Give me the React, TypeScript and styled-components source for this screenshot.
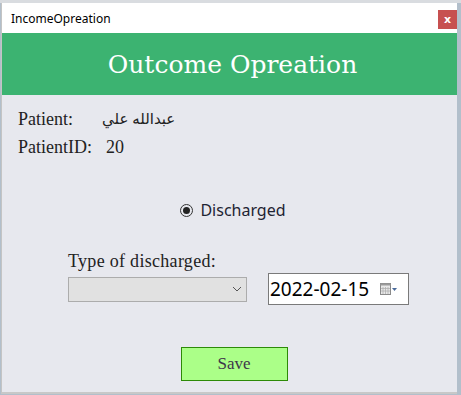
import * as React from 'react';
import styled, { createGlobalStyle } from 'styled-components';

const GlobalStyle = createGlobalStyle`
  html, body {
    margin: 0;
    padding: 0;
    background: #b9c3cc;
  }
  body {
    width: 461px;
    height: 395px;
    overflow: hidden;
  }
`;

const Desktop = styled.div`
  width: 461px;
  height: 395px;
  box-sizing: border-box;
  padding: 3px 4px 1px 1px;
  background: linear-gradient(to bottom, #d9dce0 0, #d9dce0 3px, #b2bfcb 3px);
`;

const Window = styled.div`
  height: 100%;
  box-sizing: border-box;
  border-left: 1px solid #c4c4c4;
  border-bottom: 2px solid #c8c8c8;
  display: flex;
  flex-direction: column;
  background: #e7e8ee;
`;

const TitleBar = styled.div`
  height: 30px;
  background: #ffffff;
  display: flex;
  align-items: center;
  justify-content: space-between;
  padding: 0 0 0 9px;
  font-family: "Noto Sans", "Open Sans", sans-serif;
  font-size: 12px;
  color: #000;
`;

const CloseButton = styled.div`
  width: 19px;
  height: 19px;
  margin-top: 3px;
  background: #c75050;
  color: #fff;
  font-family: "DejaVu Sans", sans-serif;
  font-weight: bold;
  font-size: 11px;
  display: flex;
  align-items: center;
  justify-content: center;
  line-height: 1;
`;

const Banner = styled.div`
  height: 62px;
  background: #3cb371;
  color: #ffffff;
  display: flex;
  align-items: center;
  justify-content: center;
  padding-left: 6px;
  font-family: "DejaVu Serif", serif;
  font-size: 25px;
`;

const Body = styled.div`
  flex: 1;
  display: flex;
  flex-direction: column;
  padding: 10px 0 0 16px;
  font-family: "Liberation Serif", "DejaVu Sans", serif;
  font-size: 18px;
  color: #222;
`;

const InfoRow = styled.div`
  display: flex;
  align-items: center;
  height: 28px;
`;

const InfoLabel = styled.span<{ $w: number }>`
  width: ${(p) => p.$w}px;
`;

const ArabicValue = styled.span`
  font-family: "Liberation Serif", "DejaVu Sans", serif;
  font-size: 15px;
  direction: rtl;
`;

const RadioRow = styled.div`
  display: flex;
  align-items: center;
  justify-content: center;
  gap: 7px;
  margin-top: 37px;
  padding-right: 9px;
  height: 24px;
  font-family: "Noto Sans", "Open Sans", sans-serif;
  font-size: 16px;
  color: #1e2433;
`;

const RadioCircle = styled.span`
  width: 11px;
  height: 11px;
  border: 1px solid #333;
  border-radius: 50%;
  display: flex;
  align-items: center;
  justify-content: center;
  &::after {
    content: "";
    width: 7px;
    height: 7px;
    border-radius: 50%;
    background: #222;
  }
`;

const TypeSection = styled.div`
  display: flex;
  flex-direction: column;
  margin-top: 28px;
  padding-left: 50px;
`;

const TypeLabel = styled.div`
  height: 22px;
  line-height: 22px;
  margin-bottom: 1px;
  letter-spacing: 0.3px;
`;

const Controls = styled.div`
  display: flex;
  align-items: center;
  gap: 21px;
  height: 32px;
`;

const SelectBox = styled.div`
  width: 179px;
  height: 25px;
  box-sizing: border-box;
  border: 1px solid #acacac;
  background: #e1e1e1;
  display: flex;
  align-items: center;
  justify-content: flex-end;
  padding-right: 4px;
`;

const DateBox = styled.div`
  width: 141px;
  height: 32px;
  box-sizing: border-box;
  border: 1px solid #7a7a7a;
  background: #ffffff;
  display: flex;
  align-items: center;
  justify-content: space-between;
  padding: 0 10px 0 1px;
  font-family: "Noto Sans", "Open Sans", sans-serif;
  font-size: 19px;
  color: #000;
`;

const SaveRow = styled.div`
  display: flex;
  justify-content: center;
  margin-top: 42px;
  padding-right: 7px;
`;

const SaveButton = styled.button`
  width: 107px;
  height: 34px;
  box-sizing: border-box;
  border: 1px solid #2d8a07;
  background: #abff88;
  font-family: "Liberation Serif", serif;
  font-size: 17px;
  color: #3e364a;
  padding: 0;
`;

function Chevron() {
  return (
    <svg width="10" height="6" viewBox="0 0 10 6">
      <path d="M1 1 L5 5 L9 1" fill="none" stroke="#555" strokeWidth="1" />
    </svg>
  );
}

function CalendarIcon() {
  return (
    <svg width="18" height="14" viewBox="0 0 18 14">
      <rect x="0.5" y="1.5" width="10" height="11" fill="#e8e8e8" stroke="#8a8a8a" />
      <rect x="0.5" y="1.5" width="10" height="2" fill="#9a9a9a" />
      <path d="M3 5 V12 M5.5 5 V12 M8 5 V12 M1 6.5 H10 M1 9 H10" stroke="#b0b0b0" strokeWidth="0.8" />
      <path d="M12 6 L17 6 L14.5 9 Z" fill="#4a6a9a" />
    </svg>
  );
}

function App() {
  return (
    <Desktop>
      <GlobalStyle />
      <Window>
        <TitleBar>
          <span>IncomeOpreation</span>
          <CloseButton>x</CloseButton>
        </TitleBar>
        <Banner>Outcome Opreation</Banner>
        <Body>
          <InfoRow>
            <InfoLabel $w={84}>Patient:</InfoLabel>
            <ArabicValue>عبدالله علي</ArabicValue>
          </InfoRow>
          <InfoRow>
            <InfoLabel $w={88}>PatientID:</InfoLabel>
            <span>20</span>
          </InfoRow>
          <RadioRow>
            <RadioCircle />
            <span>Discharged</span>
          </RadioRow>
          <TypeSection>
            <TypeLabel>Type of discharged:</TypeLabel>
            <Controls>
              <SelectBox>
                <Chevron />
              </SelectBox>
              <DateBox>
                <span>2022-02-15</span>
                <CalendarIcon />
              </DateBox>
            </Controls>
          </TypeSection>
          <SaveRow>
            <SaveButton>Save</SaveButton>
          </SaveRow>
        </Body>
      </Window>
    </Desktop>
  );
}

export default App;
